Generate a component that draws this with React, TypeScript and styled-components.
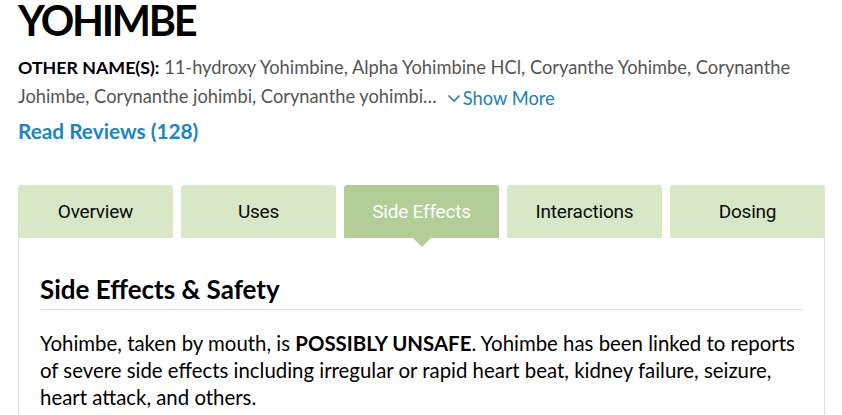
import React from "react";
import styled, { createGlobalStyle } from "styled-components";

const GlobalStyle = createGlobalStyle`
  html, body {
    margin: 0;
    padding: 0;
    background: #fff;
  }
  body {
    font-family: Lato, "Liberation Sans", sans-serif;
    color: #000;
  }
`;

const tabs = ["Overview", "Uses", "Side Effects", "Interactions", "Dosing"];

const Page = styled.div`
  padding: 0 17px 0 18px;
  width: 807px;
`;

const Title = styled.h1`
  margin: 0;
  font-size: 41.5px;
  line-height: 40px;
  font-weight: 700;
  letter-spacing: -2.3px;
`;

const OtherNames = styled.p`
  margin: 13px 0 0;
  font-size: 18.3px;
  line-height: 29px;
  color: #555;
`;

const Label = styled.strong`
  color: #000;
  font-weight: 700;
  font-size: 17.8px;
`;

const ShowMore = styled.button`
  display: inline-flex;
  align-items: center;
  gap: 2px;
  margin-left: 10px;
  padding: 0;
  border: 0;
  background: none;
  font: inherit;
  color: #1c80c0;
  cursor: pointer;
`;

const Reviews = styled.a`
  display: block;
  margin-top: 4px;
  font-size: 20.8px;
  line-height: 28px;
  font-weight: 700;
  color: #1a85c4;
  text-decoration: none;
`;

const TabBar = styled.div`
  display: grid;
  grid-template-columns: repeat(5, 1fr);
  gap: 8px;
  margin-top: 40px;
`;

const Tab = styled.button<{ $active?: boolean }>`
  position: relative;
  height: 53px;
  padding: 0;
  border: 0;
  border-radius: 3px 3px 0 0;
  background: ${(p) => (p.$active ? "#b2cd95" : "#d8e8c7")};
  color: ${(p) => (p.$active ? "#fff" : "#0a0a0a")};
  font-family: Roboto, sans-serif;
  font-size: 19px;
  letter-spacing: -0.2px;
  cursor: pointer;

  &::after {
    content: "";
    display: ${(p) => (p.$active ? "block" : "none")};
    position: absolute;
    left: 50%;
    bottom: -9px;
    margin-left: -9px;
    border-left: 9px solid transparent;
    border-right: 9px solid transparent;
    border-top: 9px solid #b2cd95;
  }
`;

const Panel = styled.section`
  border: 1px solid #dedede;
  border-top: 0;
  padding: 35px 21px 20px 21px;
`;

const Heading = styled.h2`
  margin: 0;
  padding-bottom: 4px;
  border-bottom: 1px solid #dcdcdc;
  font-size: 26px;
  line-height: 32px;
  font-weight: 700;
`;

const Body = styled.p`
  margin: 20px 0 0;
  font-size: 20.4px;
  line-height: 27px;
`;

const Chevron = () => (
  <svg width="14" height="10" viewBox="0 0 14 10" fill="none">
    <path d="M1.5 2.5 L7 8 L12.5 2.5" stroke="currentColor" strokeWidth="1.6" />
  </svg>
);

export default function App() {
  return (
    <>
      <GlobalStyle />
      <Page>
        <Title>YOHIMBE</Title>
        <OtherNames>
          <Label>OTHER NAME(S):</Label> 11-hydroxy Yohimbine, Alpha Yohimbine HCl,
          Coryanthe Yohimbe, Corynanthe Johimbe, Corynanthe johimbi, Corynanthe
          yohimbi…
          <ShowMore>
            <Chevron />
            Show More
          </ShowMore>
        </OtherNames>
        <Reviews href="#">Read Reviews (128)</Reviews>
        <TabBar>
          {tabs.map((t) => (
            <Tab key={t} $active={t === "Side Effects"}>
              {t}
            </Tab>
          ))}
        </TabBar>
        <Panel>
          <Heading>Side Effects &amp; Safety</Heading>
          <Body>
            Yohimbe, taken by mouth, is <strong>POSSIBLY UNSAFE</strong>. Yohimbe
            has been linked to reports of severe side effects including irregular
            or rapid heart beat, kidney failure, seizure, heart attack, and others.
          </Body>
        </Panel>
      </Page>
    </>
  );
}
